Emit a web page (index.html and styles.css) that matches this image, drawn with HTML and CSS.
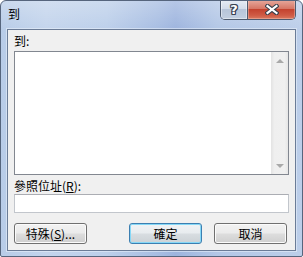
FILE: index.html
```html
<!DOCTYPE html>
<html lang="zh-Hant">
<head>
<meta charset="utf-8">
<link rel="stylesheet" href="styles.css">
</head>
<body>
<div class="window">
  <div class="titlebar">
    <span class="title">到</span>
    <div class="caption-btns">
      <div class="cbtn help"><span class="help-glyph">?</span></div>
      <div class="cbtn close">
        <svg width="14" height="11" viewBox="0 0 14 11">
          <path d="M2.5 2 L11.5 9 M11.5 2 L2.5 9" stroke="#38404c" stroke-width="4.2" stroke-linecap="square"/>
          <path d="M2.5 2 L11.5 9 M11.5 2 L2.5 9" stroke="#ffffff" stroke-width="2.2" stroke-linecap="square"/>
        </svg>
      </div>
    </div>
  </div>
  <div class="client">
    <div class="label l1">到:</div>
    <div class="listbox">
      <div class="list-area"></div>
      <div class="vscroll">
        <div class="sarrow"><span class="tri up"></span></div>
        <div class="strack"></div>
        <div class="sarrow"><span class="tri down"></span></div>
      </div>
    </div>
    <div class="label l2">參照位址(<u>R</u>):</div>
    <div class="textbox"></div>
    <div class="buttons">
      <button class="btn">特殊(<u>S</u>)...</button>
      <div class="spacer"></div>
      <button class="btn default">確定</button>
      <button class="btn">取消</button>
    </div>
  </div>
</div>
</body>
</html>
```
FILE: styles.css
```css
html, body {
  margin: 0;
  padding: 0;
  background: #ffffff;
}
body {
  font-family: "Noto Sans CJK TC", "Noto Sans", sans-serif;
  font-size: 12px;
  color: #000;
}
.window {
  width: 303px;
  height: 257px;
  box-sizing: border-box;
  border: 1px solid #56657d;
  border-radius: 6px 6px 2px 2px;
  background:
    linear-gradient(to bottom, rgba(255,255,255,0.25), rgba(255,255,255,0) 30px),
    linear-gradient(to right, #b8cce8 0%, #c3d4ec 15%, #bccfea 35%, #a7bde2 52%, #9db4de 58%, #b3c7e6 72%, #bccee9 100%);
  display: flex;
  flex-direction: column;
  overflow: hidden;
}
.titlebar {
  height: 28px;
  flex: none;
  display: flex;
  justify-content: space-between;
  align-items: flex-start;
  padding-left: 7px;
  padding-right: 6px;
}
.title {
  margin-top: 4px;
  line-height: 18px;
  font-size: 12px;
  color: #000;
}
.caption-btns {
  display: flex;
  margin-top: -1px;
  height: 20px;
  border: 1px solid #4d5a6e;
  border-top: none;
  border-radius: 0 0 5px 5px;
  overflow: hidden;
  box-sizing: border-box;
}
.cbtn {
  height: 19px;
  display: flex;
  align-items: center;
  justify-content: center;
  box-sizing: border-box;
}
.help {
  width: 27px;
  background: linear-gradient(to bottom, #e6ecf4 0%, #d3dcea 45%, #b7c5d9 50%, #c2cfe0 100%);
  border-right: 1px solid #4d5a6e;
  box-shadow: inset 0 0 0 1px rgba(255,255,255,0.45);
}
.help-glyph {
  font-family: "DejaVu Sans", sans-serif;
  font-weight: bold;
  font-size: 13px;
  line-height: 14px;
  color: #ffffff;
  text-shadow: 1px 0 0 #3a4352, -1px 0 0 #3a4352, 0 1px 0 #3a4352, 0 -1px 0 #3a4352, 1px 1px 0 #3a4352, -1px -1px 0 #3a4352, 1px -1px 0 #3a4352, -1px 1px 0 #3a4352;
}
.close {
  width: 47px;
  background: linear-gradient(to bottom, #e7aa9e 0%, #d67766 45%, #c4432f 50%, #cf5a44 80%, #d97a60 100%);
  box-shadow: inset 0 0 0 1px rgba(255,220,210,0.35);
}
.client {
  flex: 1;
  margin: 0 6px 5px 6px;
  border: 1px solid #6b7c97;
  box-shadow: 0 0 0 1px rgba(235,242,252,0.55);
  background: #f0f0f0;
  padding: 0 6px;
  display: flex;
  flex-direction: column;
}
.label {
  line-height: 16px;
  height: 16px;
  white-space: nowrap;
}
.l1 {
  margin-top: 3px;
}
.listbox {
  margin-top: 2px;
  height: 124px;
  box-sizing: border-box;
  border: 1px solid #828790;
  background: #ffffff;
  display: flex;
}
.list-area {
  flex: 1;
}
.vscroll {
  width: 17px;
  display: flex;
  flex-direction: column;
  background: linear-gradient(to right, #e3e3e3 0%, #efefef 20%, #f0f0f0 80%, #e6e6e6 100%);
}
.sarrow {
  height: 17px;
  display: flex;
  align-items: center;
  justify-content: center;
}
.strack {
  flex: 1;
}
.tri {
  width: 0;
  height: 0;
  border-left: 4px solid transparent;
  border-right: 4px solid transparent;
}
.tri.up {
  border-bottom: 4px solid #a9a9a9;
}
.tri.down {
  border-top: 4px solid #a9a9a9;
}
.l2 {
  margin-top: 3px;
  height: 15px;
}
.textbox {
  margin-top: 1px;
  height: 19px;
  box-sizing: border-box;
  border: 1px solid #c2c6cc;
  border-top-color: #abadb3;
  background: #ffffff;
}
.buttons {
  margin-top: 10px;
  display: flex;
  align-items: center;
  padding-right: 2px;
}
.spacer {
  flex: 1;
}
.btn {
  width: 73px;
  height: 21px;
  padding: 0;
  margin: 0;
  font-family: "Noto Sans CJK TC", "Noto Sans", sans-serif;
  font-size: 12px;
  line-height: 16px;
  color: #000;
  border: 1px solid #707070;
  border-radius: 3px;
  background: linear-gradient(to bottom, #f2f2f2 0%, #ebebeb 48%, #dddddd 52%, #cfcfcf 100%);
  box-shadow: inset 0 0 0 1px #fbfbfb;
  box-sizing: border-box;
}
.btn + .btn {
  margin-left: 12px;
}
.btn.default {
  border-color: #3c7fb1;
  box-shadow: inset 0 0 0 1px #86d8f7;
  background: linear-gradient(to bottom, #f0f3f5 0%, #e8ecef 48%, #d8dde1 52%, #ccd2d6 100%);
}
u {
  text-decoration: underline;
  text-underline-offset: 1px;
}
```
